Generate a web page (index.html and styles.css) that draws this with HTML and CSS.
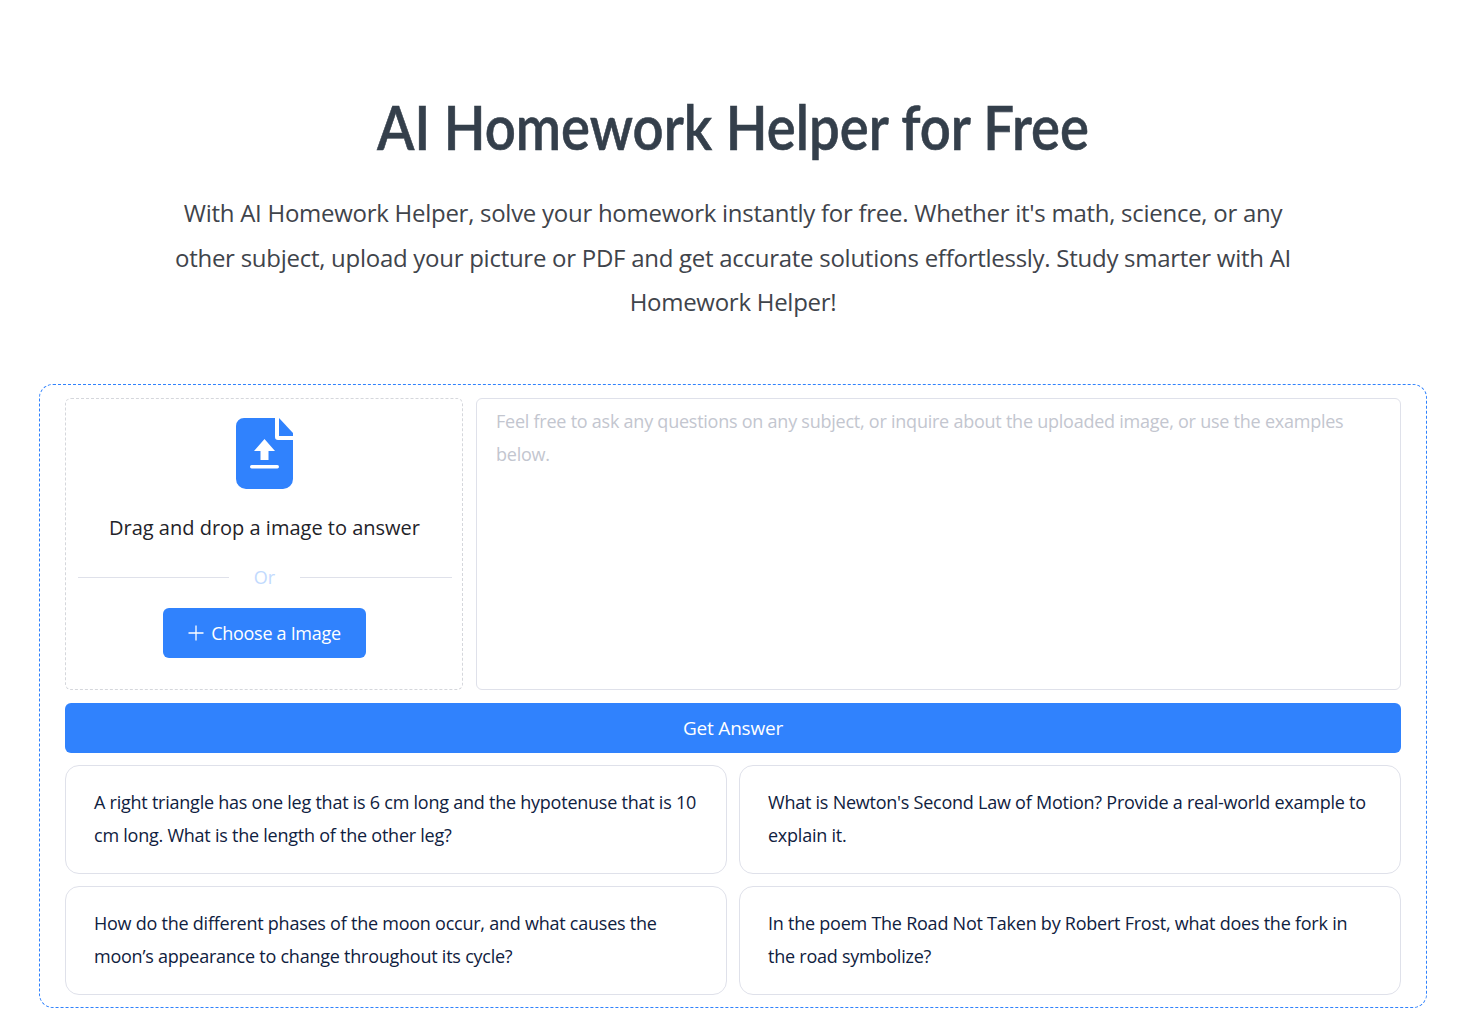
FILE: index.html
```html
<!DOCTYPE html>
<html lang="en">
<head>
<meta charset="utf-8">
<title>AI Homework Helper for Free</title>
<link rel="stylesheet" href="styles.css">
</head>
<body>
<main class="page">
  <header class="hero">
    <h1 class="title">AI Homework Helper for Free</h1>
    <p class="lead">With AI Homework Helper, solve your homework instantly for free. Whether it's math, science, or any other subject, upload your picture or PDF and get accurate solutions effortlessly. Study smarter with AI Homework Helper!</p>
  </header>
  <section class="tool">
    <div class="inputs">
      <div class="drop">
        <svg class="file-icon" viewBox="0 0 57 71" width="57" height="71" aria-hidden="true">
          <path fill="#3082fd" d="M8 0H39V19a3 3 0 0 0 3 3H57V61a10 10 0 0 1-10 10H10A10 10 0 0 1 0 61V8A8 8 0 0 1 8 0Z"/>
          <path fill="#3082fd" d="M43 0 57 15V18H43Z"/>
          <path fill="#fff" d="M28.500 21 39 33H32.500V42H24.500V33H18Z"/>
          <rect fill="#fff" x="14" y="47" width="29" height="3.500" rx="1.700"/>
        </svg>
        <p class="drop-text">Drag and drop a image to answer</p>
        <div class="divider"><span class="rule"></span><span class="or">Or</span><span class="rule"></span></div>
        <button class="choose" type="button">
          <svg class="plus" viewBox="0 0 16 16" width="16" height="16" aria-hidden="true"><path d="M8 .5v15M.5 8h15" stroke="#fff" stroke-width="1.300" fill="none"/></svg>
          Choose a Image
        </button>
      </div>
      <textarea class="question" placeholder="Feel free to ask any questions on any subject, or inquire about the uploaded image, or use the examples below."></textarea>
    </div>
    <button class="submit" type="button">Get Answer</button>
    <div class="examples">
      <div class="example">A right triangle has one leg that is 6 cm long and the hypotenuse that is 10 cm long. What is the length of the other leg?</div>
      <div class="example">What is Newton's Second Law of Motion? Provide a real-world example to explain it.</div>
      <div class="example">How do the different phases of the moon occur, and what causes the moon’s appearance to change throughout its cycle?</div>
      <div class="example">In the poem The Road Not Taken by Robert Frost, what does the fork in the road symbolize?</div>
    </div>
  </section>
</main>
</body>
</html>
```
FILE: styles.css
```css
* { box-sizing: border-box; }
html, body { margin: 0; padding: 0; background: #fff; }
body { font-family: "Open Sans", "Noto Sans", sans-serif; color: #1f2a3a; }
.page { width: 1471px; height: 1030px; overflow: hidden; padding: 0 44px 0 39px; }
.hero { padding-top: 88px; display: flex; flex-direction: column; align-items: center; }
.title {
  margin: 0; font-family: "Lato", sans-serif; font-weight: 600; font-size: 62px; line-height: 76px;
  color: #343f4b; white-space: nowrap; text-align: center;
  transform: scaleX(.879);
  -webkit-text-stroke: .6px #343f4b;
}
.lead {
  margin: 27px 0 0; width: 1130px; text-align: center; font-size: 24px; line-height: 44.500px; color: #3f444b;
  letter-spacing: -.27px;
}
.tool {
  margin-top: 59px; height: 624px; border: 1px dashed #3082fd; border-radius: 14px;
  padding: 13px 25px 12px; display: flex; flex-direction: column; gap: 13px;
}
.inputs { display: flex; gap: 13px; height: 292px; flex: none; }
.drop {
  width: 398px; flex: none; border: 1px dashed #d5d7dc; border-radius: 6px;
  padding: 19px 10.500px 0 11.500px; display: flex; flex-direction: column; align-items: center;
}
.file-icon { display: block; flex: none; }
.drop-text { margin: 24px 0 0; font-size: 20px; line-height: 30px; color: #1f2329; }
.divider { width: 100%; display: flex; align-items: center; margin-top: 21px; height: 28px; }
.rule { flex: 1; height: 1px; background: #dfe1ea; }
.or { width: 71px; text-align: center; font-size: 18px; line-height: 28px; position: relative; top: -1px; color: #c2dafe; }
.choose {
  margin-top: 16px; width: 203px; height: 50px; flex: none; border: 0; border-radius: 6px; background: #3082fd;
  color: #fff; font: 18px "Open Sans", sans-serif; letter-spacing: -.3px;
  display: flex; align-items: center; justify-content: center; gap: 7px;
}
.question {
  flex: 1; border: 1px solid #dfe1ea; border-radius: 6px; padding: 6px 19px; resize: none; outline: 0;
  font: 18px/33px "Open Sans", sans-serif; letter-spacing: -.24px;
}
.question::placeholder { color: #c3c6cf; opacity: 1; }
.submit {
  height: 50px; flex: none; border: 0; border-radius: 6px; background: #3082fd; color: #fff;
  font: 19px "Open Sans", sans-serif; letter-spacing: -.2px;
}
.examples { display: grid; grid-template-columns: 1fr 1fr; grid-template-rows: 108.500px 109px; gap: 12px; margin-top: -.5px; }
.example {
  border: 1px solid #dfe1ea; border-radius: 14px; padding: 20px 26px 20px 28px;
  font-size: 18px; line-height: 33px; color: #0f2140; letter-spacing: -.24px;
}
```
